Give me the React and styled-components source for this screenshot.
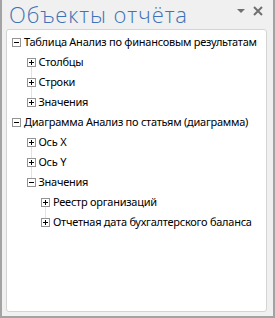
import React from "react";
import styled, { createGlobalStyle } from "styled-components";

const Global = createGlobalStyle`
  html, body { margin: 0; padding: 0; }
  body { width: 275px; height: 318px; overflow: hidden; background: #fff; }
`;

const Frame = styled.div`
  box-sizing: border-box;
  width: 275px;
  height: 318px;
  background: #f0f0f0;
  border-left: 2px solid #a3a3a3;
  border-right: 2px solid #a3a3a3;
  border-bottom: 2px solid #a3a3a3;
  display: flex;
  flex-direction: column;
  padding: 0 6px 4px 4px;
  font-family: "Noto Sans", sans-serif;
`;

const Header = styled.div`
  height: 29px;
  display: flex;
  align-items: flex-start;
  justify-content: space-between;
`;

const Title = styled.div`
  font-family: "Open Sans", "Noto Sans", sans-serif;
  font-weight: 300;
  font-size: 22px;
  letter-spacing: 0.9px;
  line-height: 28px;
  color: #3d72b8;
  padding-left: 3px;
`;

const Controls = styled.div`
  display: flex;
  align-items: center;
  gap: 8px;
  padding-top: 6px;
  padding-right: 4px;
`;

const Panel = styled.div`
  flex: 1;
  background: #fff;
  border: 1px solid #d4d4d4;
  border-radius: 3px;
  padding-top: 2px;
`;

const INDENT = 14.5;

const Row = styled.div`
  position: relative;
  height: 20px;
  display: flex;
  align-items: center;
  padding-left: ${(p) => 5 + p.$level * INDENT}px;
  font-size: 11px;
  letter-spacing: -0.25px;
  color: #000;
  white-space: nowrap;
`;

const Guide = styled.span`
  position: absolute;
  left: ${(p) => Math.round(9 + p.$level * INDENT)}px;
  top: ${(p) => (p.$pos === "first" ? "10px" : "0")};
  height: ${(p) => (p.$pos === "middle" ? "20px" : "10px")};
  width: 1px;
  background: #e2e2e2;
`;

const Box = styled.span`
  box-sizing: border-box;
  width: 9px;
  height: 9px;
  border: 1px solid #939393;
  background: #fff;
  position: relative;
  margin-right: 3px;
  flex: none;
  &::before {
    content: "";
    position: absolute;
    left: 1px;
    top: 3px;
    width: 5px;
    height: 1px;
    background: #000;
  }
  &::after {
    content: "";
    display: ${(p) => (p.$open ? "none" : "block")};
    position: absolute;
    left: 3px;
    top: 1px;
    width: 1px;
    height: 5px;
    background: #000;
  }
`;

const Label = styled.span`
  line-height: 20px;
`;

const Arrow = () => (
  <svg width="8" height="4" viewBox="0 0 8 4">
    <path d="M0 0h8L4 4z" fill="#707070" />
  </svg>
);

const Close = () => (
  <svg width="10" height="10" viewBox="0 0 10 10">
    <path d="M1 1L9 9M9 1L1 9" stroke="#707070" strokeWidth="2" />
  </svg>
);

const items = [
  { level: 0, open: true, text: "Таблица Анализ по финансовым результатам" },
  { level: 1, open: false, text: "Столбцы", pos: "first" },
  { level: 1, open: false, text: "Строки", pos: "middle" },
  { level: 1, open: false, text: "Значения", pos: "last" },
  { level: 0, open: true, text: "Диаграмма Анализ по статьям (диаграмма)" },
  { level: 1, open: false, text: "Ось X", pos: "first" },
  { level: 1, open: false, text: "Ось Y", pos: "middle" },
  { level: 1, open: true, text: "Значения", pos: "last" },
  { level: 2, open: false, text: "Реестр организаций", pos: "first" },
  { level: 2, open: false, text: "Отчетная дата бухгалтерского баланса", pos: "last" },
];

export default function App() {
  return (
    <>
      <Global />
      <Frame>
        <Header>
          <Title>Объекты отчёта</Title>
          <Controls>
            <Arrow />
            <Close />
          </Controls>
        </Header>
        <Panel>
          {items.map((it, i) => (
            <Row key={i} $level={it.level}>
              {it.pos && <Guide $level={it.level} $pos={it.pos} />}
              <Box $open={it.open} />
              <Label>{it.text}</Label>
            </Row>
          ))}
        </Panel>
      </Frame>
    </>
  );
}
